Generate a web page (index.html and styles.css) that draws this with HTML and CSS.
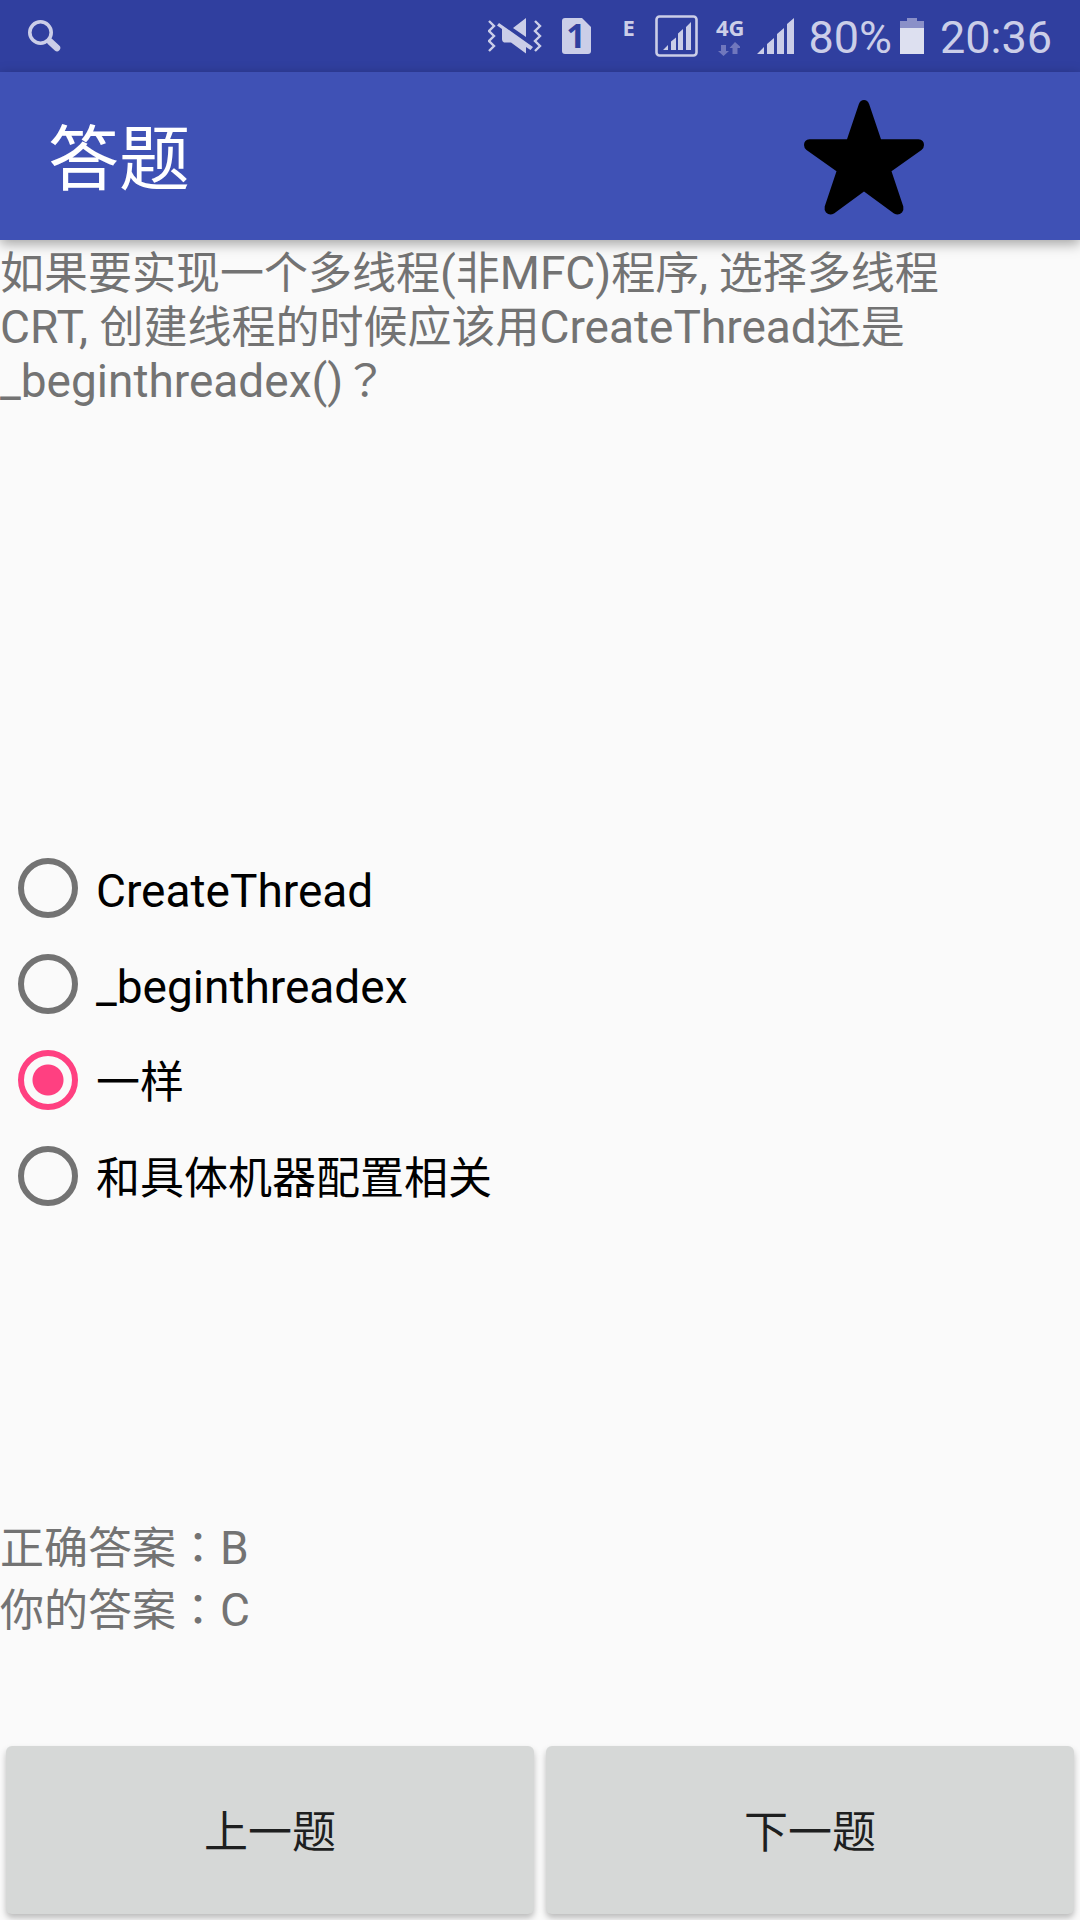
FILE: index.html
```html
<!DOCTYPE html>
<html lang="zh-CN">
<head>
<meta charset="utf-8">
<meta name="viewport" content="width=device-width, initial-scale=1">
<title>答题</title>
<link rel="stylesheet" href="styles.css">
</head>
<body>
<div class="status-bar">
  <svg class="status-search" width="36" height="72" viewBox="26 0 36 72" aria-hidden="true">
    <circle cx="40.500" cy="32.500" r="10.700" fill="none" stroke="currentColor" stroke-width="3.600"/>
    <path d="M50 41.500L57 48" stroke="currentColor" stroke-width="6.500" stroke-linecap="round"/>
  </svg>
  <div class="status-icons">
    <svg width="58" height="72" viewBox="488 0 58 72" aria-hidden="true">
      <path d="M489 21l5 5-5 5 5 5-5 5 5 5-5 5M535 21l5 5-5 5 5 5-5 5 5 5-5 5" fill="none" stroke="currentColor" stroke-width="2.400"/>
      <path d="M499 23l34 24-2.500 3-4.500-3v6.500L511 42.500h-7q-2-1-2-3V29l-5-3.500zM513 28l13-10v19z" fill="currentColor"/>
    </svg>
    <svg width="29" height="72" viewBox="562 0 29 72" aria-hidden="true">
      <path d="M565 18h17l9 9v24q0 3-3 3h-23q-3 0-3-3V21q0-3 3-3z" fill="currentColor"/>
      <text class="sim-number" x="576" y="48" text-anchor="middle">1</text>
    </svg>
    <span class="network network-edge">E</span>
    <svg width="43" height="72" viewBox="655 0 43 72" aria-hidden="true">
      <rect x="656.500" y="16.500" width="40" height="39" rx="3" fill="none" stroke="currentColor" stroke-width="2.600"/>
      <path d="M663 50l5-5v5zM671 50V41.500l5-4V50zM678 50V33.500l5-4.500V50zM686 50V27l5-5v28z" fill="currentColor"/>
    </svg>
    <span class="network network-4g">4G
      <svg width="24" height="14" viewBox="716 40 24 14" aria-hidden="true">
        <path d="M721 43h5v6h3l-5.500 5-5.500-5h3zM732.500 52h5v-6h4l-6.500-6-5.500 6h3z" fill="#7077bd"/>
      </svg>
    </span>
    <svg width="37" height="72" viewBox="757 0 37 72" aria-hidden="true">
      <path d="M757 54l7-7v7zM767 54V44l7-6v16zM777 54V34l7-6v26zM787 54V24l7-6v36z" fill="currentColor"/>
    </svg>
    <span class="status-text battery-level">80%</span>
    <svg width="24" height="72" viewBox="901 0 24 72" aria-hidden="true">
      <path d="M901 21h7v-3h10v3h7v7h-24z" fill="#8a90c8"/>
      <path d="M901 28h24v26h-24z" fill="#dde0f0"/>
    </svg>
    <time class="status-text">20:36</time>
  </div>
</div>

<header class="app-bar">
  <h1 class="title">答题</h1>
  <button class="favorite" type="button" aria-label="收藏">
    <svg width="120" height="120" viewBox="0 0 120 120" aria-hidden="true">
      <path d="M54.800 4.200Q56.500 0 60 0T65.200 4.200L77 39.300H114.500Q120 39.800 120 45Q120 48 117.500 50L87.500 71.300L99.300 106.500Q100 110 98 112.500Q94.500 116 90 113.500L60 91.500L30 113.500Q25.500 116 22 112.500Q20 110 20.700 106.500L32.500 71.300L2.500 50Q0 48 0 45Q0 39.800 5.500 39.300H43Z" fill="#000"/>
    </svg>
  </button>
</header>

<main class="quiz">
  <p class="question" id="question">如果要实现一个多线程<span class="latin">(</span>非<span class="latin">MFC)</span>程序, 选择多线程<span class="latin">CRT, </span>创建线程的时候应该用<span class="latin">CreateThread</span>还是<span class="latin">_beginthreadex()</span><span class="mark" lang="zh-TW">？</span></p>

  <div class="options" role="radiogroup" aria-labelledby="question">
    <label class="option"><input class="radio" type="radio" name="answer" value="A"><span class="option-text latin">CreateThread</span></label>
    <label class="option"><input class="radio" type="radio" name="answer" value="B"><span class="option-text latin">_beginthreadex</span></label>
    <label class="option"><input class="radio" type="radio" name="answer" value="C" checked><span class="option-text">一样</span></label>
    <label class="option"><input class="radio" type="radio" name="answer" value="D"><span class="option-text">和具体机器配置相关</span></label>
  </div>

  <div class="answers">
    <p class="answer">正确答案<span class="mark" lang="zh-TW">：</span><span class="latin">B</span></p>
    <p class="answer">你的答案<span class="mark" lang="zh-TW">：</span><span class="latin">C</span></p>
  </div>
</main>

<nav class="pager">
  <button class="pager-button" type="button">上一题</button>
  <button class="pager-button" type="button">下一题</button>
</nav>
</body>
</html>
```
FILE: styles.css
```css
* {
  box-sizing: border-box;
}

body {
  margin: 0;
  min-height: 100vh;
  display: flex;
  flex-direction: column;
  background: #fafafa;
  color: #737373;
  font-family: Roboto, "Noto Sans CJK SC", sans-serif;
  font-size: 44px;
  line-height: 54px;
}

h1,
p {
  margin: 0;
  font-weight: 400;
}

svg {
  display: block;
  flex: none;
}

.latin {
  font-size: 46px;
  line-height: 1;
}

/* Full-width punctuation centred in its cell */
.mark {
  font-family: "Noto Sans CJK TC", sans-serif;
  line-height: 1;
}

.status-bar {
  display: flex;
  justify-content: space-between;
  height: 72px;
  padding: 0 28px 0 26px;
  background: #303f9f;
  color: #cbcee8;
}

.status-icons {
  display: flex;
  gap: 16px;
}

.status-text {
  font-size: 45px;
  line-height: 76px;
}

.battery-level {
  margin: 0 -8px 0 -2px;
}

.network {
  padding-top: 12px;
  font-family: "Noto Sans", sans-serif;
  font-size: 22px;
  font-weight: 700;
  line-height: 30px;
}

.network-edge {
  padding: 12px 4px 0 16px;
}

.network-4g {
  margin: 0 -3px 0 2px;
}

.sim-number {
  fill: #303f9f;
  font-family: "Noto Sans", sans-serif;
  font-size: 34px;
  font-weight: 700;
}

.app-bar {
  position: relative;
  display: flex;
  align-items: center;
  justify-content: space-between;
  height: 168px;
  padding: 8px 156px 0 48px;
  background: #3f51b5;
  box-shadow: 0 4px 12px rgba(0, 0, 0, 0.35);
}

.title {
  color: #fff;
  font-size: 71px;
  line-height: 96px;
}

.favorite {
  padding: 0;
  border: 0;
  background: none;
}

.quiz {
  flex: 1;
  display: grid;
  grid-template-rows: 600fr auto 516fr;
}

.question {
  padding: 7px 96px 0 0;
}

.options {
  display: flex;
  flex-direction: column;
}

.option {
  display: flex;
  align-items: center;
  gap: 18px;
  height: 96px;
  padding-left: 18px;
  color: #000;
}

.option-text {
  padding-top: 5px;
}

.radio {
  appearance: none;
  width: 60px;
  height: 60px;
  margin: 0;
  border: 6px solid #737373;
  border-radius: 50%;
}

.radio:checked {
  border-color: #ff4081;
  background: radial-gradient(circle, #ff4081 15px, transparent 16px);
}

.answers {
  padding-top: 294px;
}

.answer {
  line-height: 62px;
}

.pager {
  display: flex;
  gap: 12px;
  padding: 6px;
}

.pager-button {
  flex: 1;
  height: 168px;
  padding: 6px 0 0;
  border: 0;
  border-radius: 6px;
  background: #d6d8d7;
  box-shadow: 0 4px 6px rgba(0, 0, 0, 0.25);
  color: #1e1f1f;
  font: inherit;
}
```
